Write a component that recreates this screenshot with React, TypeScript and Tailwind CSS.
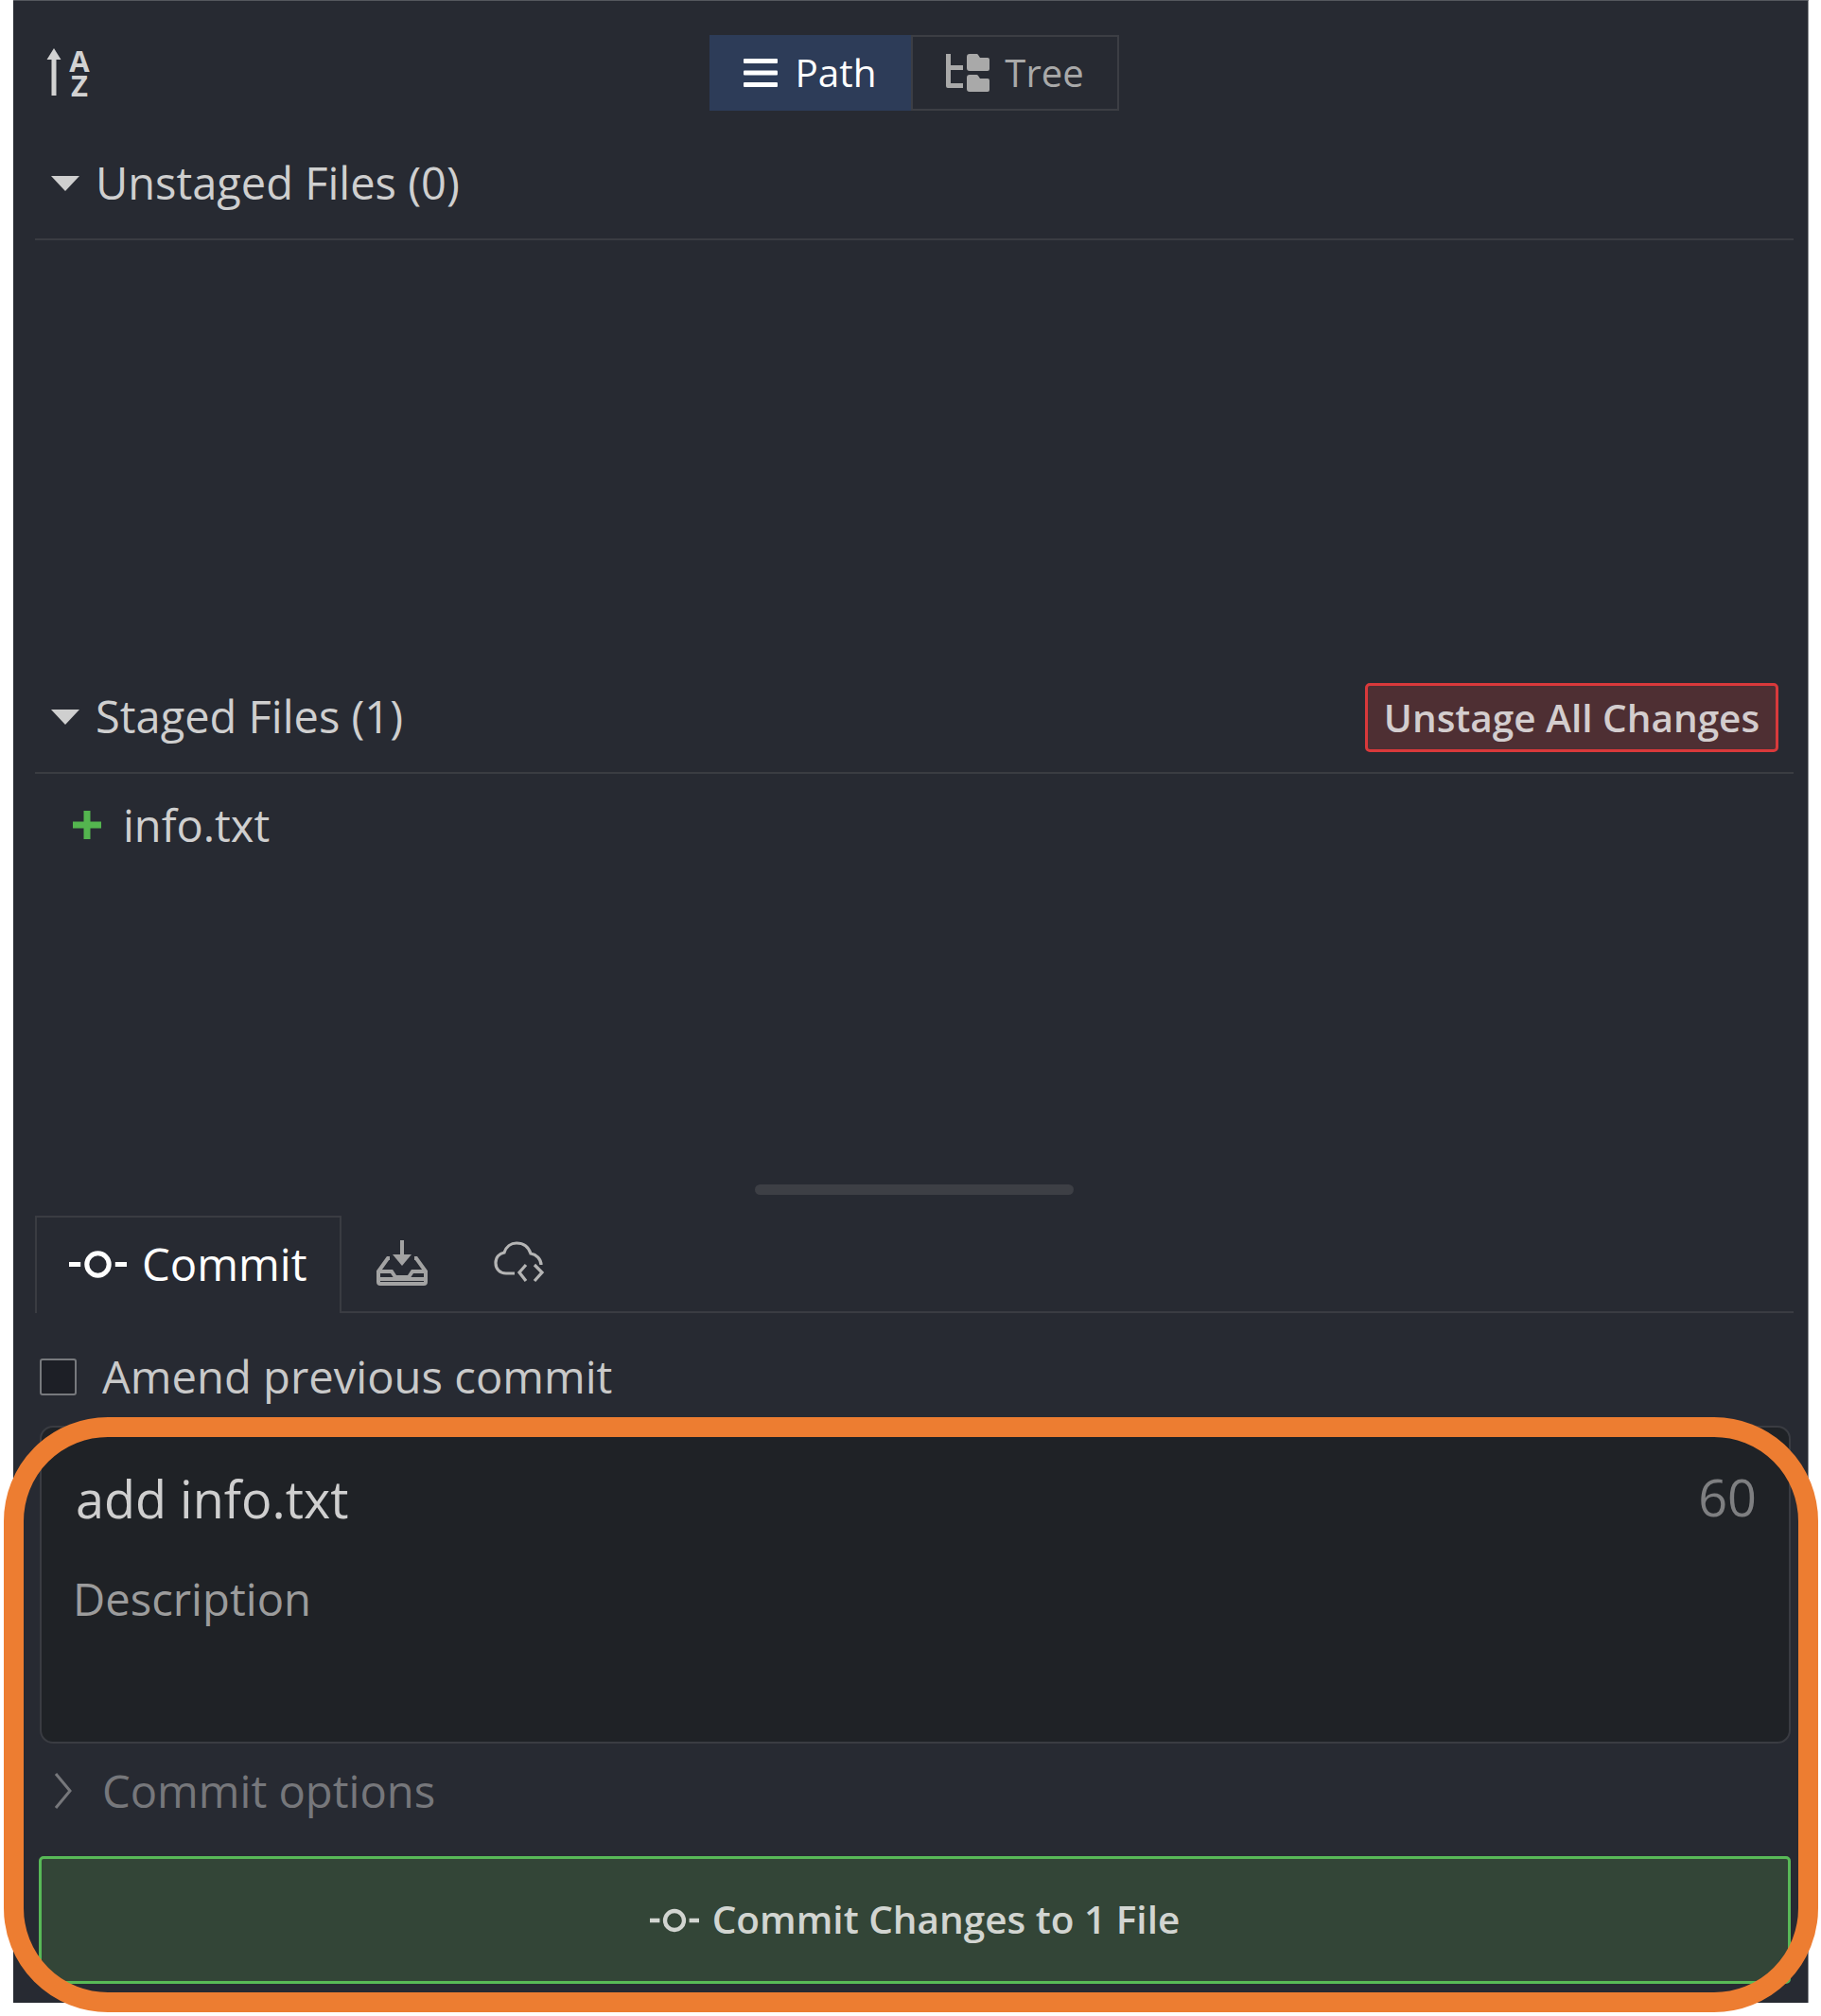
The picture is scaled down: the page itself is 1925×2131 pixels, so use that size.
import React from 'react';

const CommitIcon: React.FC<{ className?: string }> = ({ className }) => (
  <svg viewBox="0 0 60 32" className={className} fill="none" stroke="currentColor" strokeWidth="5">
    <circle cx="30" cy="16" r="11.500" />
    <path d="M0 16h12M48 16h12" />
  </svg>
);

const SortIcon = () => (
  <div className="flex items-center gap-[7px] text-[#d2d2d2]">
    <svg viewBox="0 0 16 52" className="w-[16px] h-[52px]" fill="currentColor">
      <path d="M8 0l7.500 12H10.500v38h-5V12H.500z" />
    </svg>
    <span className="w-[24px] text-center text-[31px] leading-[26px] font-bold">A Z</span>
  </div>
);

const TreeIcon = () => (
  <svg viewBox="0 0 46 40" className="w-[46px] h-[40px] text-[#a9a9a9]" fill="currentColor">
    <path d="M0 0h5v12h13v5H5v14h13v5H2a2 2 0 0 1-2-2z" />
    <path d="M25 0h7a2 2 0 0 1 2 1l2 3h8a2 2 0 0 1 2 2v10a2 2 0 0 1-2 2H25a3 3 0 0 1-3-3V3a3 3 0 0 1 3-3z" />
    <path d="M25 22h7a2 2 0 0 1 2 1l2 3h8a2 2 0 0 1 2 2v10a2 2 0 0 1-2 2H25a3 3 0 0 1-3-3V25a3 3 0 0 1 3-3z" />
  </svg>
);

const StashIcon = () => (
  <svg viewBox="0 0 54 48" className="w-[54px] h-[48px] text-[#a3a3a3]" fill="none" stroke="currentColor" strokeWidth="4">
    <path d="M27 0v20" />
    <path d="M17 15h20l-10 12z" fill="currentColor" stroke="none" />
    <path d="M14 19h-2L2 33v11a2 2 0 0 0 2 2h46a2 2 0 0 0 2-2V33L42 19h-2" />
    <path d="M2 33h14l4 6h14l4-6h14" />
    <path d="M2 41h50" />
  </svg>
);

const CloudCodeIcon = () => (
  <svg viewBox="0 0 54 46" className="w-[54px] h-[46px] text-[#b5b5b5]" fill="none" stroke="currentColor" strokeWidth="3.200">
    <path d="M22 34H13C6 34 2 29 2 23c0-6 4-10 9-11C13 6 18 2 24 2c8 0 13 5 15 11 6 1 11 6 11 12" />
    <path d="M34 25l-7 8 7 9M43 25l8 8-8 9" />
  </svg>
);

const SectionHeader: React.FC<{ title: string; children?: React.ReactNode }> = ({ title, children }) => (
  <div className="flex items-center h-[118px] border-b-2 border-[#3a3c42]">
    <span className="ml-[17px] mr-[17px] w-0 h-0 border-x-[15px] border-x-transparent border-t-[16px] border-t-[#cfcfcf]" />
    <span className="-mt-[2px] text-[47px] text-[#cfcfcf]">{title}</span>
    {children}
  </div>
);

export default function App() {
  return (
    <div className="relative h-[2131px] bg-white pl-[14px] pr-[13px] font-['Open_Sans','Noto_Sans',sans-serif]">
      <div className="h-[2117px] bg-[#272a32] border-t border-r border-t-[#55585e] border-r-[#8b8d92] pl-[23px] pr-[15px] flex flex-col">
        {/* toolbar */}
        <div className="grid grid-cols-[1fr_auto_1fr] items-center pt-[36px] h-[116px]">
          <div className="pl-[12px]">
            <SortIcon />
          </div>
          <div className="flex h-[80px]">
            <div className="w-[213px] bg-[#2d3c58] flex items-center justify-center gap-[18px] text-white text-[40.500px]">
              <svg viewBox="0 0 36 30" className="w-[36px] h-[30px]" fill="currentColor">
                <rect width="36" height="5" rx="1" />
                <rect y="12.500" width="36" height="5" rx="1" />
                <rect y="25" width="36" height="5" rx="1" />
              </svg>
              Path
            </div>
            <div className="w-[220px] border-2 border-[#3c3e44] flex items-center justify-center gap-[16px] text-[#a9a9a9] text-[40px]">
              <TreeIcon />
              Tree
            </div>
          </div>
          <div />
        </div>

        {/* unstaged */}
        <div className="mt-[19px]">
          <SectionHeader title="Unstaged Files (0)" />
        </div>

        {/* staged */}
        <div className="mt-[446px]">
          <SectionHeader title="Staged Files (1)">
            <button className="ml-auto mr-[16px] h-[73px] w-[437px] rounded-[5px] border-[3px] border-[#d9393b] bg-[#4e2f33] text-[#d3cdce] text-[40.500px] font-semibold flex items-center justify-center pt-[3px]">
              Unstage All Changes
            </button>
          </SectionHeader>
        </div>
        <div className="flex items-center h-[108px] pl-[40px] gap-[23px] text-[47px] text-[#cfcfcf]">
          <svg viewBox="0 0 30 30" className="w-[30px] h-[30px] text-[#54b54f]" fill="currentColor">
            <path d="M11.500 0h7v11.500H30v7H18.500V30h-7V18.500H0v-7h11.500z" />
          </svg>
          info.txt
        </div>

        {/* resize handle */}
        <div className="mt-[326px] mx-auto w-[337px] h-[11px] rounded-full bg-[#3d3f45]" />

        {/* tabs */}
        <div className="mt-[22px] flex items-center h-[103px] border-b-2 border-[#3a3c42]">
          <div className="h-[103px] w-[324px] -mb-[2px] border-x-2 border-t-2 border-[#3a3c42] bg-[#272a32] flex items-center pl-[34px] pb-[2px] gap-[16px] text-white text-[47.300px]">
            <CommitIcon className="w-[61px] h-[33px]" />
            Commit
          </div>
          <div className="ml-[37px] -mt-[2px]"><StashIcon /></div>
          <div className="ml-[70px] -mt-[2px]"><CloudCodeIcon /></div>
        </div>

        {/* amend */}
        <div className="mt-[47px] flex items-center pl-[5px] h-[40px] gap-[27px] text-[47.200px] text-[#c9c9c9]">
          <span className="w-[39px] h-[39px] rounded-[3px] border-2 border-[#77797d] bg-[#1d1f26]" />
          Amend previous commit
        </div>

        {/* message box */}
        <div className="mt-[32px] ml-[5px] mr-[3px] h-[336px] rounded-[14px] border-2 border-[#3a3c42] bg-[#1f2226] pl-[36px] pr-[34px] pt-[45px]">
          <div className="flex items-center justify-between h-[60px]">
            <span className="text-[54px] text-[#cfcfcf]">add info.txt</span>
            <span className="text-[54px] text-[#7e7f81] -mt-[3px]">60</span>
          </div>
          <div className="mt-[46px] -ml-[3px] text-[47.200px] leading-[60px] text-[#9c9c9c]">Description</div>
        </div>

        {/* options */}
        <div className="mt-[20px] flex items-center h-[60px] text-[47.200px] text-[#76777b]">
          <svg viewBox="0 0 20 38" className="w-[20px] h-[38px] ml-[20px] mr-[31px] text-[#76777b]" fill="none" stroke="currentColor" strokeWidth="3">
            <path d="M2 1l15 18L2 37" />
          </svg>
          Commit options
        </div>

        {/* commit button */}
        <button className="mt-[39px] ml-[4px] mr-[3px] h-[135px] rounded-[5px] border-[3px] border-[#58b957] bg-[#334537] text-[#d2d5d1] text-[40.500px] font-semibold flex items-center justify-center gap-[14px]">
          <CommitIcon className="w-[52px] h-[28px]" />
          Commit Changes to 1 File
        </button>
      </div>

      {/* callout */}
      <div className="absolute left-[4px] top-[1498px] w-[1918px] h-[629px] rounded-[110px] border-[21px] border-[#ed7d31] pointer-events-none" />
    </div>
  );
}
